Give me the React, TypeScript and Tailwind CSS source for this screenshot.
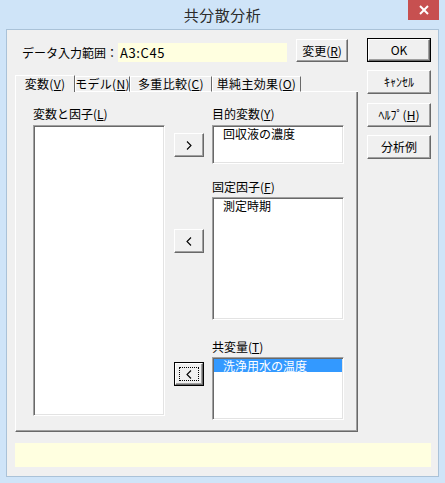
import React from "react";

const font = "font-['Noto_Sans_CJK_JP','Liberation_Sans',sans-serif]";

function U({ c }: { c: string }) {
  return <span className="underline underline-offset-[1px] decoration-1">{c}</span>;
}

function Btn({
  children,
  className = "",
  strong = false,
  focus = false,
}: {
  children: React.ReactNode;
  className?: string;
  strong?: boolean;
  focus?: boolean;
}) {
  const inner = (
    <div className="relative w-full h-full flex items-center justify-center bg-[#f0f0f0] border border-t-white border-l-white border-r-[#696969] border-b-[#696969] shadow-[inset_-1px_-1px_0_#a0a0a0] text-[12px] leading-[14px] text-black whitespace-nowrap">
      {children}
      {focus && <div className="absolute inset-[3px] border border-dotted border-black" />}
    </div>
  );
  if (strong) {
    return <div className={`border border-black ${className}`}>{inner}</div>;
  }
  return <div className={className}>{inner}</div>;
}

function ListBox({
  className = "",
  children,
}: {
  className?: string;
  children?: React.ReactNode;
}) {
  return (
    <div
      className={`bg-white border border-t-[#a0a0a0] border-l-[#a0a0a0] border-r-white border-b-white shadow-[inset_1px_1px_0_#696969,inset_-1px_-1px_0_#e3e3e3] p-[1px] ${className}`}
    >
      {children}
    </div>
  );
}

function Chevron({ dir }: { dir: "l" | "r" }) {
  return (
    <svg width="6" height="9" viewBox="0 0 6 9" className="block">
      {dir === "r" ? (
        <polyline points="1,0.5 5,4.5 1,8.5" fill="none" stroke="#000" strokeWidth="1.1" />
      ) : (
        <polyline points="5,0.5 1,4.5 5,8.5" fill="none" stroke="#000" strokeWidth="1.1" />
      )}
    </svg>
  );
}

function Tab({
  children,
  w,
  selected = false,
}: {
  children: React.ReactNode;
  w: string;
  selected?: boolean;
}) {
  return (
    <div
      className={`${w} flex items-center justify-center whitespace-nowrap text-[12px] leading-[14px] tracking-[0.3px] border-l border-t border-l-white border-t-white border-r border-r-[#696969] ${
        selected ? "h-[17px] pb-[1px]" : "h-[16px] border-b border-b-white"
      }`}
    >
      {children}
    </div>
  );
}

export default function App() {
  return (
    <div className={`w-[445px] h-[483px] bg-[#cfe4f8] ${font} text-black overflow-hidden`}>
      {/* title bar */}
      <div className="relative h-[29px] flex items-center justify-center">
        <span className="text-[15px] leading-[18px] text-[#2b2b2b] tracking-[0.5px] mt-[1px]">共分散分析</span>
        <div className="absolute left-[408px] top-0 w-[31px] h-[20px] bg-[#c75050] flex items-center justify-center">
          <svg width="10" height="10" viewBox="0 0 10 10">
            <line x1="1" y1="1" x2="9" y2="9" stroke="#fff" strokeWidth="2" />
            <line x1="9" y1="1" x2="1" y2="9" stroke="#fff" strokeWidth="2" />
          </svg>
        </div>
      </div>

      {/* client */}
      <div className="ml-[6px] w-[433px] h-[448px] border border-[#aac2d8] bg-[#f0f0f0] pl-[8px] pt-[8px]">
        <div className="flex">
          {/* left column */}
          <div className="w-[343px]">
            <div className="flex items-start h-[25px]">
              <div className="ml-[7px] w-[96px] mt-[8px] text-[12px] leading-[14px] whitespace-nowrap">データ入力範囲：</div>
              <div className="mt-[5px] h-[19px] w-[169px] bg-[#ffffe0] pl-[2px] text-[13px] leading-[19px] tracking-[0.6px]">A3:C45</div>
              <Btn className="ml-[9px] mt-[1px] w-[52px] h-[23px]">
                変更(<U c="R" />)
              </Btn>
            </div>

            {/* tabs */}
            <div className="mt-[12px] h-[17px] flex items-end">
              <Tab w="w-[60px]" selected>
                変数(<U c="V" />)
              </Tab>
              <Tab w="w-[55px]">
                モデル(<U c="N" />)
              </Tab>
              <Tab w="w-[82px]">
                多重比較(<U c="C" />)
              </Tab>
              <Tab w="w-[89px]">
                単純主効果(<U c="O" />)
              </Tab>
              <div className="flex-1 h-[16px] border-b border-b-white" />
            </div>

            {/* panel */}
            <div className="h-[340px] border-l border-l-white border-r border-b border-r-[#696969] border-b-[#696969] shadow-[inset_-1px_-1px_0_#a0a0a0] pl-[17px] flex">
              <div className="w-[132px] flex flex-col">
                <div className="mt-[15px] h-[14px] text-[12px] leading-[14px] whitespace-nowrap">
                  変数と因子(<U c="L" />)
                </div>
                <ListBox className="mt-[4px] h-[291px] w-[132px]" />
              </div>

              <div className="ml-[9px] w-[30px] flex flex-col">
                <Btn className="mt-[41px] h-[24px] w-[30px]">
                  <Chevron dir="r" />
                </Btn>
                <Btn className="mt-[72px] h-[24px] w-[30px]">
                  <Chevron dir="l" />
                </Btn>
                <Btn className="mt-[109px] h-[24px] w-[30px]" strong focus>
                  <Chevron dir="l" />
                </Btn>
              </div>

              <div className="ml-[8px] w-[132px] flex flex-col">
                <div className="mt-[15px] h-[14px] text-[12px] leading-[14px] whitespace-nowrap">
                  目的変数(<U c="Y" />)
                </div>
                <ListBox className="mt-[4px] h-[39px]">
                  <div className="pl-[9px] h-[13px] text-[12px] leading-[13px] whitespace-nowrap">回収液の濃度</div>
                </ListBox>
                <div className="mt-[16px] h-[14px] text-[12px] leading-[14px] whitespace-nowrap">
                  固定因子(<U c="F" />)
                </div>
                <ListBox className="mt-[3px] h-[123px]">
                  <div className="pl-[9px] h-[13px] text-[12px] leading-[13px] whitespace-nowrap">測定時期</div>
                </ListBox>
                <div className="mt-[20px] h-[14px] text-[12px] leading-[14px] whitespace-nowrap">
                  共変量(<U c="T" />)
                </div>
                <ListBox className="mt-[3px] h-[63px]">
                  <div className="pl-[9px] h-[13px] bg-[#3399ff] text-white text-[12px] leading-[13px] whitespace-nowrap">洗浄用水の温度</div>
                </ListBox>
              </div>
            </div>
          </div>

          {/* right column */}
          <div className="ml-[9px] w-[64px] flex flex-col">
            <Btn className="h-[24px] w-[64px]" strong>
              OK
            </Btn>
            <Btn className="mt-[8px] h-[24px] w-[64px]">ｷｬﾝｾﾙ</Btn>
            <Btn className="mt-[9px] h-[24px] w-[64px]">
              ﾍﾙﾌﾟ(<U c="H" />)
            </Btn>
            <Btn className="mt-[8px] h-[24px] w-[64px]">分析例</Btn>
          </div>
        </div>

        <div className="mt-[11px] h-[24px] w-[416px] bg-[#ffffe0]" />
      </div>
    </div>
  );
}
